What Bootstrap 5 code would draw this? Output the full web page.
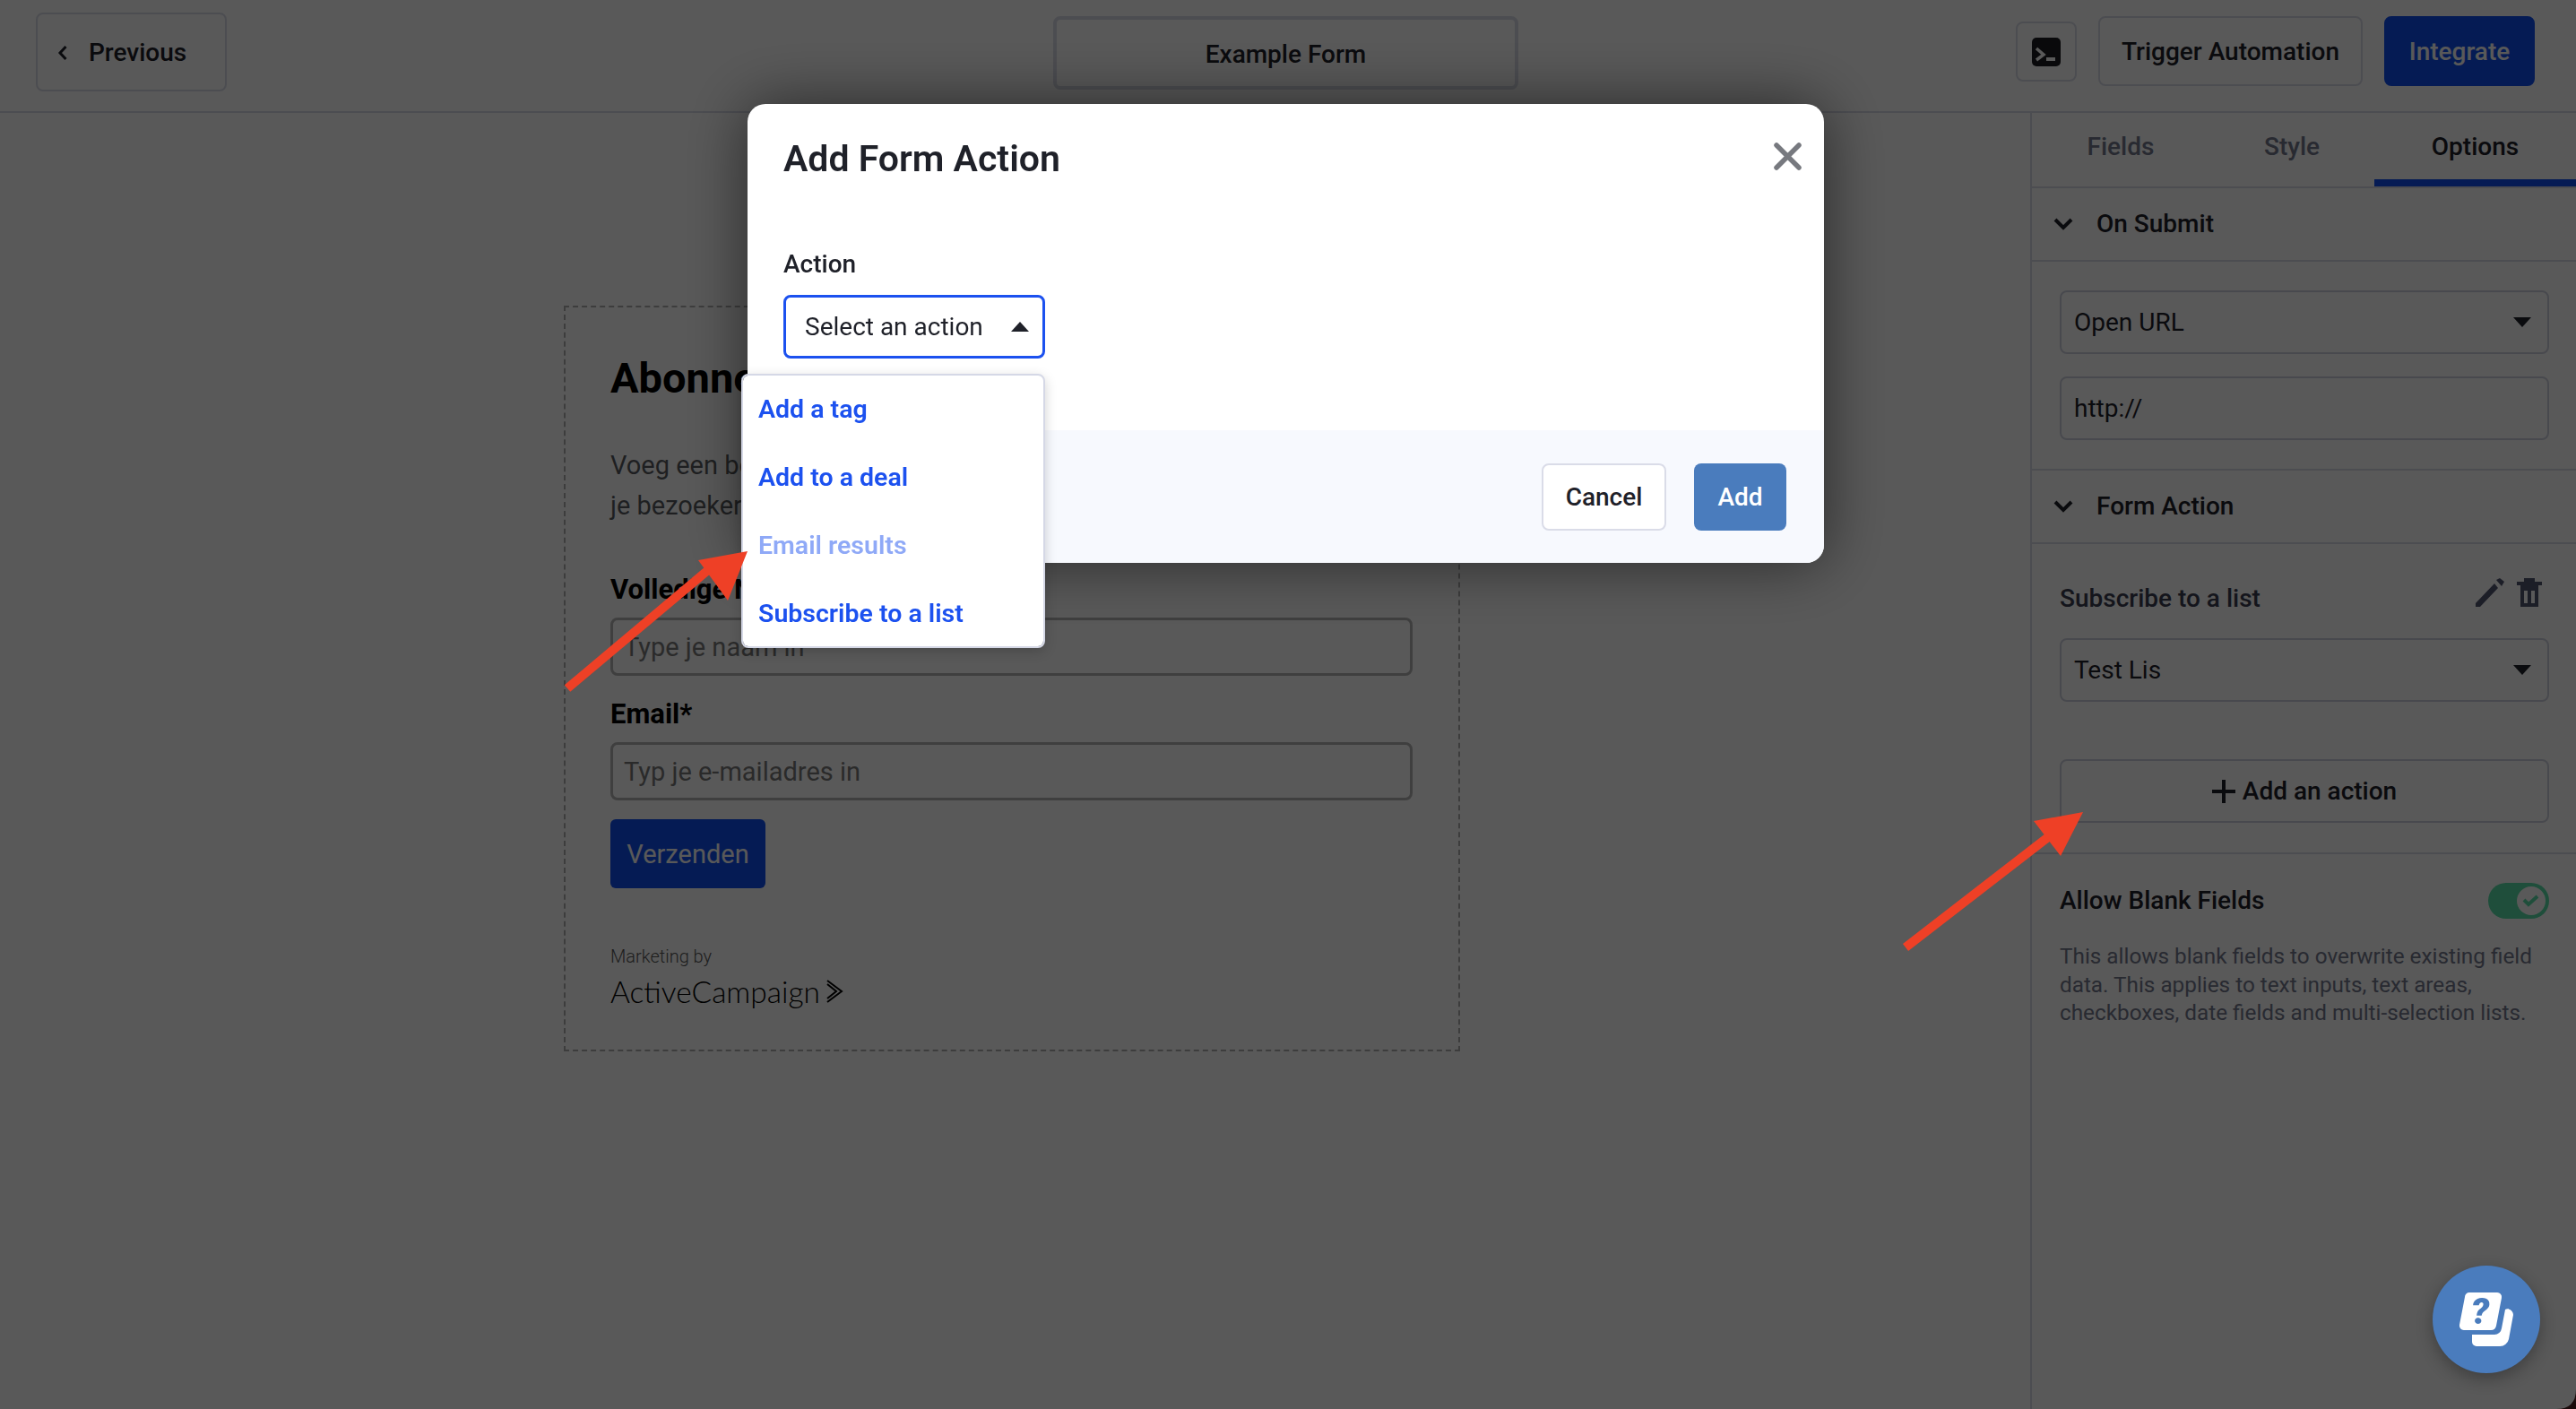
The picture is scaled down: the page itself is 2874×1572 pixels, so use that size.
<!DOCTYPE html>
<html lang="en">
<head>
<meta charset="utf-8">
<title>Example Form</title>
<link href="https://cdn.jsdelivr.net/npm/bootstrap@5.3.0/dist/css/bootstrap.min.css" rel="stylesheet">
<style>
:root { --ink:#1f2129; --line:#dadce8; --blue:#1c51ef; --mute:#74788e; }
html,body { height:100%; }
body { font-family:"Roboto","Liberation Sans",sans-serif; font-size:28px; color:var(--ink); background:#fff; overflow:hidden; }
.app-top { height:126px; border-bottom:2px solid var(--line); padding:18px 46px 0 40px; background:#fff; position:relative; }
.app-btn { font-size:28px; font-weight:500; border:2px solid var(--line); border-radius:8px; color:var(--ink); background:#fff; padding:2px 0 0; }
.back-btn { width:213px; height:88px; margin-top:-4px; gap:23px; padding-left:22px; }
.name-box { position:absolute; left:1175px; top:18px; width:519px; height:82px; border:4px solid var(--line); border-radius:8px; font-weight:500; padding-top:3px; }
.term-btn { width:68px; height:67px; margin-top:6px; padding:0; }
.trigger-btn { width:295px; height:78px; }
.integrate-btn { width:168px; height:78px; background:#0f4fef; border-color:#0f4fef; color:#fff; }
.work { height:calc(100% - 126px); }
.canvas-area { flex:1 1 auto; padding:215px 0 0 629px; }
.form-card { width:1000px; height:832px; border:2px dashed #b0b0b0; padding:50px 50px 0 50px; color:#000; }
.form-title { font-size:47px; font-weight:700; line-height:58px; margin:0 0 46px; }
.form-text { font-size:29px; line-height:45px; margin:0 0 53px; white-space:nowrap; }
.form-label-x { font-size:31px; font-weight:700; line-height:36px; margin:0 0 13px; display:block; }
.form-input { width:895px; height:65px; border:3px solid #b4b4b4; border-radius:8px; padding:0 12px; font-size:29px; line-height:61px; color:#7a7a7a; margin-bottom:25px; }
.send-btn { width:173px; height:77px; margin-top:-4px; background:#0f4fef; color:#fff; border-radius:6px; font-size:29px; border:0; padding:2px 0 0; }
.mark-by { font-size:20px; line-height:26px; margin-top:63px; color:#555; font-weight:300; }
.mark-logo { font-family:"Lato",sans-serif; font-size:33.5px; line-height:40px; font-weight:300; margin-top:6px; color:#000; gap:6px; }
.side-panel { width:609px; flex:0 0 609px; border-left:2px solid var(--line); background:#fff; }
.tab-row { height:84px; border-bottom:2px solid var(--line); }
.tab-x { text-align:center; line-height:76px; font-weight:500; color:var(--mute); height:82px; }
.tab-a { width:198px; } .tab-b { width:184px; }
.tab-c { flex:1; color:var(--ink); border-bottom:8px solid #0f4fef; }
.sec-head { height:82px; border-bottom:2px solid var(--line); padding-left:24px; gap:26px; font-weight:500; }
.sec-two { height:84px; border-top:2px solid var(--line); margin-top:32px; }
.sec-body { padding:32px 30px 0 31px; }
.field-x { height:71px; border:2px solid #cfd2df; border-radius:8px; padding:0 18px 0 14px; }
.field-gap { margin-top:25px; }
.caret-d { width:0; height:0; border-left:10px solid transparent; border-right:10px solid transparent; border-top:11px solid var(--ink); }
.caret-u { width:0; height:0; border-left:10px solid transparent; border-right:10px solid transparent; border-bottom:11px solid var(--ink); }
.act-title { font-weight:500; height:73px; color:#3a3d50; line-height:58px; padding-right:8px; }
.act-icons { gap:14px; margin-top:6px; }
.add-act { height:71px; border:2px solid #cfd2df; border-radius:8px; margin:64px 0 33px; gap:8px; font-weight:500; color:var(--ink); }
.allow-box { border-top:2px solid var(--line); padding-top:32px; }
.allow-head { font-weight:500; line-height:36px; }
.toggle-x { width:68px; height:40px; border-radius:20px; background:#5ae0a8; padding:4px; }
.toggle-knob { width:32px; height:32px; border-radius:50%; background:#fff; }
.allow-text { font-size:24.3px; line-height:31.5px; color:var(--mute); margin-top:26px; width:561px; }
.modal-backdrop.dim-x { opacity:.65; background:#000; }
.form-modal { display:block; }
.form-dialog { max-width:none; width:1201px; margin:116px 0 0 834px; }
.form-content { height:512px; border:0; border-radius:20px; box-shadow:0 0 70px rgba(0,0,0,.55); }
.form-head { border:0; padding:36px 24px 0 40px; align-items:flex-start; }
.form-head h5 { font-size:41px; font-weight:600; line-height:50px; margin:0; }
.close-x { background:none; border:0; padding:0; line-height:0; margin-top:6px; }
.form-bodyx { padding:0 41px 0 40px; flex:0 0 auto; height:278px; }
.act-label { font-weight:500; line-height:36px; margin:75px 0 16px; display:block; }
.act-select { width:292px; height:71px; border:3px solid var(--blue); border-radius:8px; padding:0 15px 0 21px; }
.form-foot { flex:1; background:#f7f9fe; border:0; padding:37px 42px 0 0; align-items:flex-start; gap:31px; justify-content:flex-end; border-radius:0 0 20px 20px; }
.cancel-x { width:139px; height:75px; border:2px solid var(--line); background:#fff; border-radius:8px; font-size:28px; font-weight:500; color:var(--ink); padding:0; margin:0; }
.add-x { width:103px; height:75px; border:0; background:#4a7cbd; color:#fff; border-radius:8px; font-size:28px; font-weight:500; padding:0; margin:0; }
.act-menu { display:block; left:827px; top:417px; width:339px; height:306px; position:fixed; padding:0; border:2px solid #d5d8e6; border-radius:8px; box-shadow:0 4px 14px rgba(0,0,0,.18); z-index:1058; }
.act-menu .dropdown-item { font-size:28.5px; font-weight:600; color:var(--blue); padding:0 0 0 17px; height:76px; line-height:76px; background:none; }
.act-menu .dropdown-item.disabled { color:#8fa9f7; }
.arrow-layer { position:fixed; left:0; top:0; width:2874px; height:1572px; z-index:1060; pointer-events:none; }
.help-x { position:fixed; left:2714px; top:1412px; width:120px; height:120px; border-radius:50%; background:#4a7cbd; border:0; padding:0; z-index:1060; box-shadow:0 6px 18px rgba(0,0,0,.3); }
.help-x svg { overflow:visible; }
</style>
</head>
<body>
<header class="app-top d-flex align-items-start justify-content-between">
  <button class="app-btn back-btn d-flex align-items-center">
    <svg width="12" height="20" viewBox="0 0 12 20"><path d="M9.500 3 3 10l6.500 7" fill="none" stroke="#1f2129" stroke-width="3"/></svg>
    <span>Previous</span>
  </button>
  <div class="name-box d-flex align-items-center justify-content-center">Example Form</div>
  <div class="d-flex align-items-start gap-4">
    <button class="app-btn term-btn d-flex align-items-center justify-content-center">
      <svg width="32" height="32" viewBox="0 0 32 32"><rect width="32" height="32" rx="5" fill="#1a1b20"/><path d="M5 12l8 7-8 6" fill="none" stroke="#fff" stroke-width="3.500"/><rect x="16" y="22" width="10" height="4" fill="#fff"/></svg>
    </button>
    <button class="app-btn trigger-btn">Trigger Automation</button>
    <button class="app-btn integrate-btn">Integrate</button>
  </div>
</header>
<div class="work d-flex">
  <main class="canvas-area">
    <section class="form-card">
      <h2 class="form-title">Abonneer</h2>
      <p class="form-text">Voeg een beschrijving toe om aan te geven wat<br>je bezoekers kunnen verwachten</p>
      <label class="form-label-x">Volledige Naam</label>
      <div class="form-input">Type je naam in</div>
      <label class="form-label-x">Email*</label>
      <div class="form-input">Typ je e-mailadres in</div>
      <button class="send-btn">Verzenden</button>
      <div class="mark-by">Marketing by</div>
      <div class="mark-logo d-flex align-items-center">ActiveCampaign
        <svg width="20" height="26" viewBox="0 0 20 26"><path d="M2 1l16 12L2 25M2 5l10 8L2 21" fill="none" stroke="#000" stroke-width="2"/></svg>
      </div>
    </section>
  </main>
  <aside class="side-panel">
    <div class="tab-row d-flex">
      <div class="tab-x tab-a">Fields</div>
      <div class="tab-x tab-b">Style</div>
      <div class="tab-x tab-c">Options</div>
    </div>
    <div class="sec-head d-flex align-items-center">
      <svg width="22" height="14" viewBox="0 0 22 14"><path d="M2 2l9 9 9-9" fill="none" stroke="#1f2129" stroke-width="4"/></svg>
      <span>On Submit</span>
    </div>
    <div class="sec-body">
      <div class="field-x d-flex align-items-center justify-content-between"><span>Open URL</span><span class="caret-d"></span></div>
      <div class="field-x field-gap d-flex align-items-center">http://</div>
    </div>
    <div class="sec-head sec-two d-flex align-items-center">
      <svg width="22" height="14" viewBox="0 0 22 14"><path d="M2 2l9 9 9-9" fill="none" stroke="#1f2129" stroke-width="4"/></svg>
      <span>Form Action</span>
    </div>
    <div class="sec-body">
      <div class="act-title d-flex justify-content-between align-items-start">
        <span>Subscribe to a list</span>
        <span class="act-icons d-flex">
          <svg width="32" height="32" viewBox="0 0 32 32"><path d="M0 28 21 6l4 5L5 32H0zM23 2l4-2 5 4-3 5z" fill="#525670"/></svg>
          <svg width="28" height="32" viewBox="0 0 28 32"><path d="M8 0h12v4h8v4h-4v24H4V8H0V4h8zM8 14v14h4V14zM16 14v14h4V14z" fill="#525670" fill-rule="evenodd"/></svg>
        </span>
      </div>
      <div class="field-x d-flex align-items-center justify-content-between"><span>Test Lis</span><span class="caret-d"></span></div>
      <button class="add-act w-100 d-flex align-items-center justify-content-center bg-white">
        <svg width="26" height="26" viewBox="0 0 26 26"><path d="M13 0v26M0 13h26" stroke="#1f2129" stroke-width="4"/></svg>
        <span>Add an action</span>
      </button>
    </div>
    <div class="sec-body allow-box">
      <div class="allow-head d-flex align-items-center justify-content-between">
        <span>Allow Blank Fields</span>
        <div class="toggle-x d-flex justify-content-end"><div class="toggle-knob d-flex align-items-center justify-content-center">
          <svg width="20" height="14" viewBox="0 0 20 14"><path d="M2 6l5 5 10-9" fill="none" stroke="#5ae0a8" stroke-width="4"/></svg>
        </div></div>
      </div>
      <p class="allow-text">This allows blank fields to overwrite existing field data. This applies to text inputs, text areas, checkboxes, date fields and multi-selection lists.</p>
    </div>
  </aside>
</div>

<div class="modal-backdrop dim-x show"></div>
<div class="modal form-modal">
  <div class="modal-dialog form-dialog">
    <div class="modal-content form-content">
      <div class="modal-header form-head justify-content-between">
        <h5 class="modal-title">Add Form Action</h5>
        <button class="close-x" aria-label="Close"><svg width="33" height="33" viewBox="0 0 33 33"><path d="M4 4l25 25M29 4 4 29" stroke="#77797f" stroke-width="5.500" stroke-linecap="round"/></svg></button>
      </div>
      <div class="modal-body form-bodyx">
        <label class="act-label">Action</label>
        <div class="act-select d-flex align-items-center justify-content-between"><span>Select an action</span><span class="caret-u"></span></div>
      </div>
      <div class="modal-footer form-foot">
        <button class="cancel-x">Cancel</button>
        <button class="add-x">Add</button>
      </div>
    </div>
  </div>
</div>
<ul class="dropdown-menu act-menu">
  <li><a class="dropdown-item" href="#">Add a tag</a></li>
  <li><a class="dropdown-item" href="#">Add to a deal</a></li>
  <li><a class="dropdown-item disabled" href="#">Email results</a></li>
  <li><a class="dropdown-item" href="#">Subscribe to a list</a></li>
</ul>
<svg class="arrow-layer" viewBox="0 0 2874 1572">
  <path d="M633 768 L790 636" stroke="#ee4026" stroke-width="10"/>
  <path d="M834 615 L779 625 L812 670 Z" fill="#ee4026"/>
  <path d="M2126 1057 L2285 934" stroke="#ee4026" stroke-width="10"/>
  <path d="M2324 906 L2269 916 L2299 955 Z" fill="#ee4026"/>
  <path d="M2852 1572 Q2874 1572 2874 1550 L2874 1572 Z" fill="#1a0a0a"/>
</svg>
<button class="help-x d-flex align-items-center justify-content-center" aria-label="Help">
  <svg width="60" height="60" viewBox="0 0 60 60"><path d="M11 0H42a5 5 0 0 1 5 6L41 37a6 6 0 0 1-6 5H5a5 5 0 0 1-5-6L6 5a5 5 0 0 1 5-5z" fill="#fff"/><path d="M51 19c4-2 9 1 9 6l-5 27a10 10 0 0 1-10 8H19a5 5 0 0 1-5-5v-8h25a8 8 0 0 0 8-7z" fill="#fff"/><text x="23" y="35" font-family="Roboto,sans-serif" font-weight="900" font-style="italic" font-size="41" fill="#4a7cbd" text-anchor="middle">?</text></svg>
</button>
<script src="https://cdn.jsdelivr.net/npm/bootstrap@5.3.0/dist/js/bootstrap.bundle.min.js"></script>
</body>
</html>
